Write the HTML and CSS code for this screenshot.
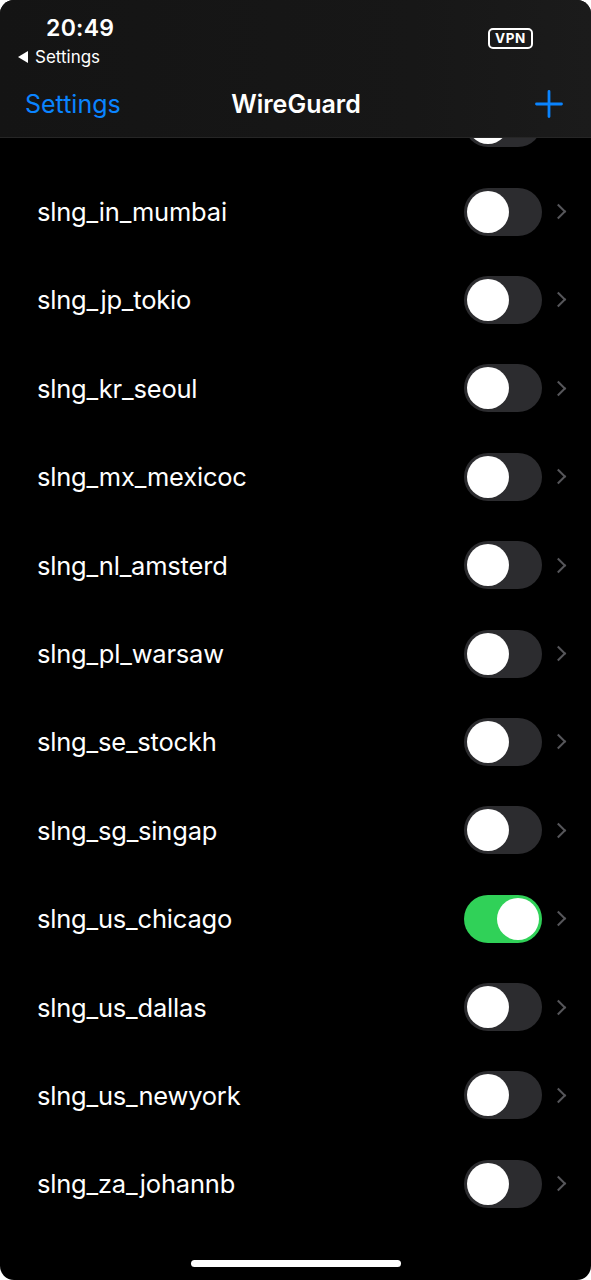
FILE: index.html
```html
<!DOCTYPE HTML>
<html>
<head>
<meta charset="utf-8">
<title>WireGuard</title>
<link rel="stylesheet" href="styles.css">
</head>

<body>
<div class="screen">
	<div class="top">
		<div class="status">
			<div class="status-left">
				<div class="time">20:49</div>
				<div class="back-app"><span class="tri"></span>Settings</div>
			</div>
			<div class="vpn">VPN</div>
		</div>
		<div class="nav">
			<a href="javascript:;" class="nav-back">Settings</a>
			<div class="nav-title">WireGuard</div>
			<a href="javascript:;" class="nav-add">
				<svg width="28" height="28" viewBox="0 0 28 28"><path d="M14 1.5V26.5M1.5 14H26.5" stroke="#0a84ff" stroke-width="2.8" stroke-linecap="round"/></svg>
			</a>
		</div>
	</div>

	<ul class="list">
		<!-- row scrolled under the header, only its switch peeks out -->
		<li><span class="name"></span><span class="switch"></span><span class="chev"></span></li>
		<li><span class="name">slng_in_mumbai</span><span class="switch"></span><span class="chev"></span></li>
		<li><span class="name">slng_jp_tokio</span><span class="switch"></span><span class="chev"></span></li>
		<li><span class="name">slng_kr_seoul</span><span class="switch"></span><span class="chev"></span></li>
		<li><span class="name">slng_mx_mexicoc</span><span class="switch"></span><span class="chev"></span></li>
		<li><span class="name">slng_nl_amsterd</span><span class="switch"></span><span class="chev"></span></li>
		<li><span class="name">slng_pl_warsaw</span><span class="switch"></span><span class="chev"></span></li>
		<li><span class="name">slng_se_stockh</span><span class="switch"></span><span class="chev"></span></li>
		<li><span class="name">slng_sg_singap</span><span class="switch"></span><span class="chev"></span></li>
		<li><span class="name">slng_us_chicago</span><span class="switch on"></span><span class="chev"></span></li>
		<li><span class="name">slng_us_dallas</span><span class="switch"></span><span class="chev"></span></li>
		<li><span class="name">slng_us_newyork</span><span class="switch"></span><span class="chev"></span></li>
		<li><span class="name">slng_za_johannb</span><span class="switch"></span><span class="chev"></span></li>
	</ul>

	<div class="home-bar"></div>
</div>
</body>
</html>
```

FILE: styles.css
```css
* {margin:0; padding:0; box-sizing:border-box;}
li {list-style:none;}
html, body {background:#fff;}
body {font-family:Inter, "Noto Sans", sans-serif; color:#fff;}

.screen {width:591px; height:1280px; background:#000; border-radius:14px; overflow:hidden; position:relative;}

/* header over the scrolled list */
.top {position:absolute; left:0; top:0; width:100%; height:138px; z-index:5; background:linear-gradient(90deg, #141414 0%, #171717 70%, #1b1b1b 100%); border-bottom:1px solid #262626;}
.status {height:70px; display:flex; justify-content:space-between; padding:13px 58px 0 18px;}
.time {font-size:23px; font-weight:600; padding-left:28px; line-height:30px; letter-spacing:0.3px;}
.back-app {font-size:17px; line-height:20px; margin-top:4px; display:flex; align-items:center;}
.tri {width:0; height:0; border-top:6px solid transparent; border-bottom:6px solid transparent; border-right:10px solid #fff; margin-right:7px;}
.vpn {margin-top:15px; height:21px; padding:0 5px; border:2px solid #fff; border-radius:5px; font-size:13.5px; font-weight:700; line-height:17px; letter-spacing:0.6px;}

.nav {height:68px; display:grid; grid-template-columns:1fr auto 1fr; align-items:center; padding:0 28px 0 25px;}
.nav a {text-decoration:none;}
.nav-back {color:#0a84ff; font-size:25px; line-height:30px; justify-self:start;}
.nav-title {font-size:25px; font-weight:600; margin-left:4px;}
.nav-add {display:flex; justify-self:end;}

/* list, scrolled so the first row sits under the header */
.list {padding-top:79px;}
.list li {height:88.4px; display:flex; align-items:center; padding:0 27px 0 37px;}
.name {flex:1; font-size:25.5px; letter-spacing:-0.2px;}
.switch {width:78px; height:48px; border-radius:24px; background:#2c2c2f; position:relative;}
.switch:after {content:""; position:absolute; left:3px; top:3px; width:42px; height:42px; border-radius:50%; background:#fff;}
.switch.on {background:#30d158;}
.switch.on:after {left:33px;}
.chev {width:11px; height:11px; border-top:2.5px solid #56565a; border-right:2.5px solid #56565a; transform:rotate(45deg); margin-left:11px;}

.home-bar {position:absolute; left:191px; bottom:13px; width:210px; height:7px; border-radius:4px; background:#fff;}
```
